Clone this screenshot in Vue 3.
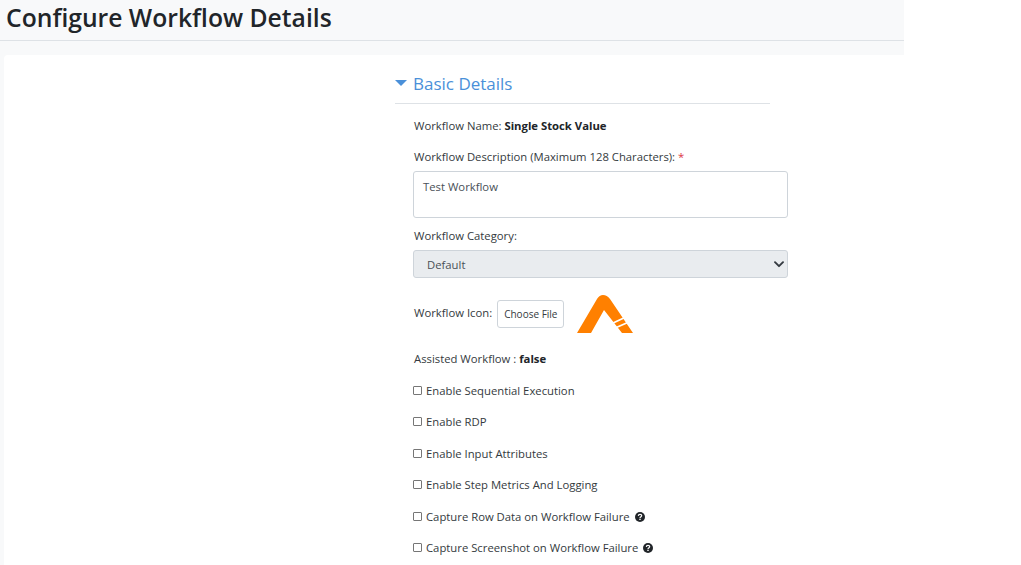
<script setup>
const checks = [
  { label: 'Enable Sequential Execution' },
  { label: 'Enable RDP' },
  { label: 'Enable Input Attributes' },
  { label: 'Enable Step Metrics And Logging' },
  { label: 'Capture Row Data on Workflow Failure', help: true },
  { label: 'Capture Screenshot on Workflow Failure', help: true },
]
</script>

<template>
  <div class="page">
    <header class="topbar">
      <h1>Configure Workflow Details</h1>
    </header>
    <main class="card">
      <section class="section">
        <div class="section-head">
          <span class="caret"></span>
          <h2>Basic Details</h2>
        </div>
        <div class="form">
          <p class="line name">Workflow Name: <b>Single Stock Value</b></p>
          <p class="line">Workflow Description (Maximum 128 Characters): <span class="req">*</span></p>
          <div class="textarea">Test Workflow</div>
          <p class="line cat">Workflow Category:</p>
          <div class="select">
            <span>Default</span>
            <svg width="10" height="7" viewBox="0 0 10 7"><path d="M1 1.200l4 4 4-4" fill="none" stroke="#343a40" stroke-width="1.900" stroke-linecap="round" stroke-linejoin="round"/></svg>
          </div>
          <div class="icon-row">
            <span class="icon-label">Workflow Icon:</span>
            <span class="file-btn">Choose File</span>
            <svg class="logo" width="57" height="38" viewBox="0 0 57 38">
              <path d="M0 38L20 4Q22.500 0 26 0Q30 0 33 4L56 38H45L27 15L14 38Z" fill="#ff8000"/>
              <path d="M35 28.500L50 21.500M37 33.500L53 26.500" stroke="#fff" stroke-width="1.800" fill="none"/>
            </svg>
          </div>
          <p class="line assisted">Assisted Workflow : <b>false</b></p>
          <ul class="checks">
            <li v-for="c in checks" :key="c.label">
              <span class="box"></span>
              <span>{{ c.label }}</span>
              <svg v-if="c.help" class="help" width="10" height="10" viewBox="0 0 10 10">
                <circle cx="5" cy="5" r="5" fill="#212529"/>
                <path d="M3.300 3.900Q3.400 2.300 5 2.300Q6.700 2.300 6.700 3.600Q6.700 4.400 5.800 4.900Q5 5.300 5 6" fill="none" stroke="#fff" stroke-width="1.200"/>
                <rect x="4.300" y="6.700" width="1.400" height="1.300" fill="#fff"/>
              </svg>
            </li>
          </ul>
        </div>
      </section>
    </main>
  </div>
</template>

<style>
html, body { margin: 0; background: #fff; }
</style>

<style scoped>
.page {
  width: 904px;
  height: 565px;
  overflow: hidden;
  background: #f8f9fa;
  font-family: "Open Sans", "Noto Sans", sans-serif;
  font-size: 11.300px;
  color: #343a40;
}
.topbar {
  height: 40px;
  border-bottom: 1px solid #dee2e6;
  padding-left: 6px;
}
h1 {
  margin: 0;
  font-size: 24.700px;
  font-weight: 600;
  line-height: 36px;
  color: #212529;
}
.card {
  margin: 14px 0 0 4px;
  height: 510px;
  background: #fff;
  border-top-left-radius: 4px;
  padding-left: 391px;
}
.section { width: 375px; }
.section-head {
  display: flex;
  align-items: center;
  height: 49px;
  padding: 10px 0 2px;
  border-bottom: 1px solid #dee2e6;
  box-sizing: border-box;
}
.caret {
  width: 0;
  height: 0;
  border-left: 6px solid transparent;
  border-right: 6px solid transparent;
  border-top: 6px solid #4a90d9;
  margin-right: 6px;
}
h2 {
  margin: 0;
  font-size: 17px;
  font-weight: 400;
  color: #4a90d9;
}
.form {
  width: 375px;
  padding-left: 18px;
  line-height: 16px;
}
.line { margin: 0; padding-left: 1px; }
.name { margin-top: 14px; }
.name + .line { margin-top: 15px; }
b { font-weight: 700; color: #212529; }
.req { color: #dc3545; }
.textarea {
  box-sizing: border-box;
  height: 47px;
  margin-top: 6px;
  padding: 7px 9px;
  border: 1px solid #ced4da;
  border-radius: 3px;
  color: #495057;
}
.cat { margin-top: 10px; }
.select {
  box-sizing: border-box;
  height: 28px;
  margin-top: 6px;
  padding: 1px 3px 0 13px;
  display: flex;
  align-items: center;
  justify-content: space-between;
  background: #e9ecef;
  border: 1px solid #ced4da;
  border-radius: 3px;
  color: #495057;
}
.icon-row {
  display: flex;
  align-items: flex-start;
  margin-top: 22px;
  height: 38px;
}
.icon-label { margin-top: 5px; padding-left: 1px; }
.file-btn {
  box-sizing: border-box;
  height: 28px;
  margin-left: 5px;
  padding: 0 6px;
  display: flex;
  align-items: center;
  border: 1px solid #ced4da;
  border-radius: 3px;
  font-size: 10px;
  color: #343a40;
}
.logo { margin-left: 13px; margin-top: -5px; flex: none; }
.assisted { margin-top: 13px; }
.checks {
  list-style: none;
  margin: 16px 0 0;
  padding: 0;
}
.checks li {
  display: flex;
  align-items: center;
  height: 16px;
  margin-bottom: 15.400px;
}
.box {
  box-sizing: border-box;
  width: 9px;
  height: 9px;
  margin: -1px 4px 0 0;
  border: 1px solid #767676;
  border-radius: 1px;
  background: #fff;
}
.help { margin-left: 5px; }
</style>
